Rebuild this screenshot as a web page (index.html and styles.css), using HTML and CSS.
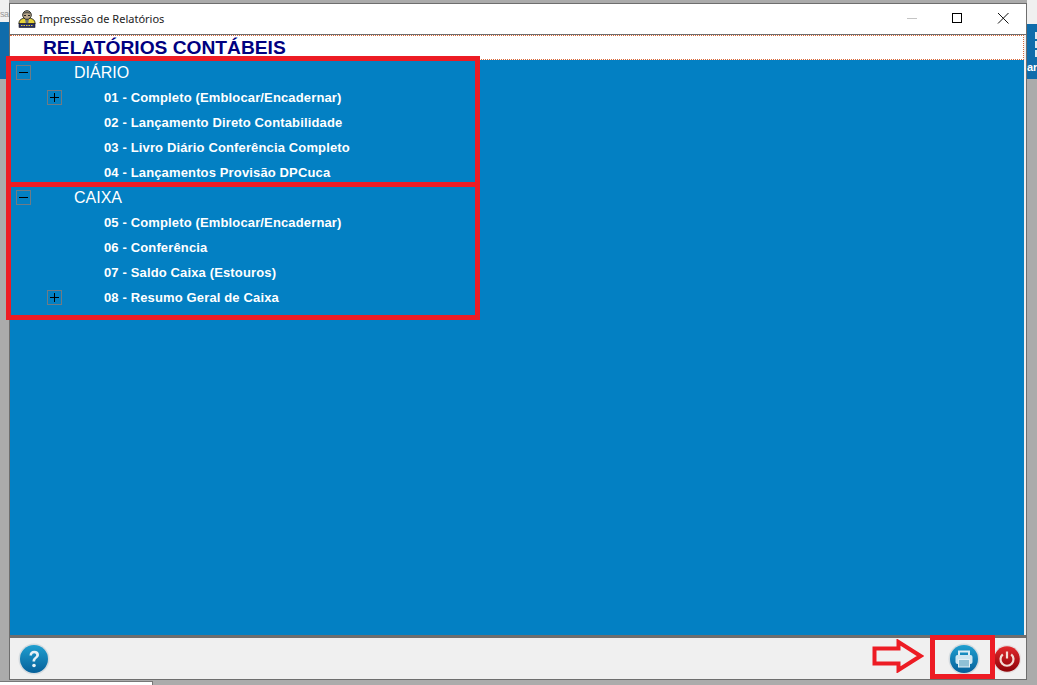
FILE: index.html
```html
<!DOCTYPE html>
<html lang="pt">
<head>
<meta charset="utf-8">
<title>Impressão de Relatórios</title>
<link rel="stylesheet" href="styles.css">
</head>
<body>
<div class="desktop">
  <div class="bg-top-left"><span>sa</span></div>
  <div class="bg-blue-left"></div>
  <div class="bg-top-right"></div>
  <div class="bg-blue-right">
    <i></i><i></i><i></i>
    <span>ar</span>
  </div>
  <div class="bg-strip"></div>

  <div class="window">
    <header class="titlebar">
      <svg class="app-icon" width="18" height="18" viewBox="0 0 18 18">
        <path d="M1 13c0-3 2.500-5 8-5s8 2 8 5v1H1z" fill="#e6d23a" stroke="#2a2a20" stroke-width=".9"/>
        <path d="M7 8.500h4l-.8 5H7.800z" fill="#6b6f78"/>
        <rect x="1" y="13.500" width="16" height="4" fill="#27306b" stroke="#1a1a1a" stroke-width=".6"/>
        <path d="M3 15.500h12" stroke="#e3c93a" stroke-dasharray="1.500 1"/>
        <circle cx="9" cy="5" r="4.300" fill="#b9a68a" stroke="#2b2b25"/>
        <path d="M5 4c.8-3 7.200-3 8 0-2.500-1-5.500-1-8 0z" fill="#55544c"/>
        <path d="M6 5.500h2M10 5.500h2" stroke="#222"/>
      </svg>
      <span class="title-text">Impressão de Relatórios</span>
      <div class="win-controls">
        <svg width="46" height="30" viewBox="0 0 46 30"><path d="M19 14.500h10" stroke="#c4c4c4"/></svg>
        <svg width="46" height="30" viewBox="0 0 46 30"><rect x="18.500" y="9.500" width="9" height="9" fill="none" stroke="#000"/></svg>
        <svg width="46" height="30" viewBox="0 0 46 30"><path d="M18 9l10.500 10.500M28.500 9L18 19.500" stroke="#111" fill="none"/></svg>
      </div>
    </header>

    <div class="content">
      <h1 class="report-title">RELATÓRIOS CONTÁBEIS</h1>
      <div class="tree">
        <div class="row group"><span class="toggle minus"></span><span class="label">DIÁRIO</span></div>
        <div class="row item"><span class="toggle plus"></span><span class="label">01 - Completo (Emblocar/Encadernar)</span></div>
        <div class="row item"><span class="label">02 - Lançamento Direto Contabilidade</span></div>
        <div class="row item"><span class="label">03 - Livro Diário Conferência Completo</span></div>
        <div class="row item"><span class="label">04 - Lançamentos Provisão DPCuca</span></div>
        <div class="row group"><span class="toggle minus"></span><span class="label">CAIXA</span></div>
        <div class="row item"><span class="label">05 - Completo (Emblocar/Encadernar)</span></div>
        <div class="row item"><span class="label">06 - Conferência</span></div>
        <div class="row item"><span class="label">07 - Saldo Caixa (Estouros)</span></div>
        <div class="row item"><span class="toggle plus"></span><span class="label">08 - Resumo Geral de Caixa</span></div>
      </div>
    </div>

    <footer class="toolbar">
      <svg class="round-btn" width="32" height="32" viewBox="0 0 32 32">
        <defs>
          <linearGradient id="blueBtn" x1="0" y1="0" x2="0" y2="1">
            <stop offset="0" stop-color="#1f9fd0"/><stop offset="1" stop-color="#06609a"/>
          </linearGradient>
          <linearGradient id="redBtn" x1="0" y1="0" x2="0" y2="1">
            <stop offset="0" stop-color="#e2292c"/><stop offset="1" stop-color="#8e0308"/>
          </linearGradient>
        </defs>
        <circle cx="16" cy="16" r="15.500" fill="#d5dbdf"/>
        <circle cx="16" cy="16" r="14" fill="url(#blueBtn)"/>
        <path d="M11.500 12.500c0-3 2-4.700 4.800-4.700s4.700 1.600 4.700 4c0 3.600-3.900 3.500-3.900 6.700h-2.600c0-4.300 3.700-4.300 3.700-6.500 0-1-.8-1.700-2-1.700s-2.100.8-2.200 2.200z" fill="#e6f1f6"/>
        <circle cx="16" cy="22.500" r="1.800" fill="#e6f1f6"/>
      </svg>
      <div class="toolbar-right">
        <svg class="round-btn" width="32" height="32" viewBox="0 0 32 32">
          <circle cx="16" cy="16" r="15.500" fill="#d5dbdf"/>
          <circle cx="16" cy="16" r="14" fill="url(#blueBtn)"/>
          <path d="M11 12V8.500h10V12" fill="none" stroke="#dcedf5" stroke-width="2"/>
          <rect x="7.500" y="12" width="17" height="9" rx="2" fill="#cfe6f1"/>
          <rect x="10.500" y="16.500" width="11" height="7.500" fill="#8fc0d6" stroke="#e4f1f7"/>
        </svg>
        <svg class="round-btn" width="28" height="30" viewBox="0 0 28 30">
          <circle cx="14" cy="15" r="14" fill="#e4dcdc"/>
          <circle cx="14" cy="15" r="12.800" fill="url(#redBtn)"/>
          <path d="M9.800 10.300a6.500 6.500 0 1 0 8.400 0" fill="none" stroke="#f3dcd4" stroke-width="2.200"/>
          <path d="M14 7.500v7" stroke="#f3dcd4" stroke-width="2.200"/>
        </svg>
      </div>
    </footer>
  </div>

  <div class="mark mark-a"></div>
  <div class="mark mark-b"></div>
  <div class="mark mark-c"></div>
  <svg class="mark-arrow" width="52" height="34" viewBox="0 0 52 34">
    <path d="M2.500 9.500h24V3L48.500 17 26.500 31v-6.500h-24z" fill="none" stroke="#ed1c24" stroke-width="4"/>
  </svg>
</div>
</body>
</html>
```
FILE: styles.css
```css
* { box-sizing: border-box; }
html, body { margin: 0; padding: 0; height: 100%; }
body { overflow: hidden; font-family: "Liberation Sans", Arial, sans-serif; }

.desktop { position: relative; width: 1037px; height: 685px; background: #ababab; overflow: hidden; }

.bg-top-left { position: absolute; left: 0; top: 0; width: 9px; height: 22px; background: #f0f0f0; color: #999; font: 9px "Liberation Sans", sans-serif; letter-spacing: -.6px; line-height: 28px; white-space: nowrap; }
.bg-blue-left { position: absolute; left: 0; top: 22px; width: 9px; height: 57px; background: #0f6cab; }
.bg-top-right { position: absolute; left: 1027px; top: 0; width: 10px; height: 24px; background: #f0f0f0; }
.bg-blue-right { position: absolute; left: 1027px; top: 24px; width: 10px; height: 55px; background: #0f6cab; display: flex; flex-direction: column; align-items: flex-start; padding: 8px 0 0 8px; gap: 2px; }
.bg-blue-right i { display: block; width: 3px; height: 7px; background: #dfeaf2; flex: none; }
.bg-blue-right span { color: #fff; font: bold 11px "Liberation Sans", sans-serif; margin: 2px 0 0 -8px; line-height: 12px; }
.bg-strip { position: absolute; left: 0; top: 681px; width: 153px; height: 4px; background: #fff; border-top: 1px solid #777; border-right: 1px solid #777; }

.window { position: absolute; left: 9px; top: 3px; width: 1018px; height: 677px; background: #f0f0f0; border: 1px solid #6e6e6e; display: flex; flex-direction: column; }

.titlebar { height: 31px; flex: none; background: #fff; display: flex; align-items: center; padding-left: 8px; border-bottom: 1px solid #6e6e6e; }
.app-icon { flex: none; margin-right: 3px; margin-bottom: 1px; }
.title-text { font: 11px "Noto Sans", "Open Sans", sans-serif; color: #222; margin-bottom: 2px; }
.win-controls { margin-left: auto; display: flex; }
.win-controls svg { display: block; }

.content { flex: 1; min-height: 0; display: flex; flex-direction: column; background: #0380c3; margin-right: 2px; }
.report-title { margin: 0; height: 25px; flex: none; background: #fff; border-top: 1px dotted #d9683a; border-bottom: 1px dotted #d9683a; border-right: 1px dotted #d9683a; color: #000080; font: bold 19.200px/24px "Liberation Sans", sans-serif; padding-left: 33px; }
.tree { display: flex; flex-direction: column; }
.row { height: 25px; display: flex; align-items: center; color: #fff; position: relative; }
.group { padding-left: 64px; font: 16px "Liberation Sans", sans-serif; }
.item { padding-left: 94px; font: bold 13px "Liberation Sans", sans-serif; letter-spacing: .14px; }
.toggle { position: absolute; top: 5px; width: 15px; height: 15px; border: 1px solid #6f7b85; }
.group .toggle { left: 6px; }
.item .toggle { left: 37px; }
.toggle::before { content: ""; position: absolute; left: 2px; right: 2px; top: 6px; height: 1px; background: #000; }
.plus::after { content: ""; position: absolute; top: 2px; bottom: 2px; left: 6px; width: 1px; background: #000; }

.toolbar { height: 44px; flex: none; display: flex; align-items: center; justify-content: space-between; padding: 0 0 0 8px; border-top: 3px solid #6e6e6e; background: #f0f0f0; }
.round-btn { display: block; flex: none; }
.toolbar-right { display: flex; align-items: center; gap: 13px; padding-right: 5px; }

.mark { position: absolute; border: 5px solid #ed1c24; pointer-events: none; }
.mark-a { left: 6px; top: 56px; width: 474px; height: 131px; }
.mark-b { left: 6px; top: 182px; width: 474px; height: 138px; }
.mark-c { left: 930px; top: 635px; width: 65px; height: 44px; }
.mark-arrow { position: absolute; left: 872px; top: 639px; }
```
